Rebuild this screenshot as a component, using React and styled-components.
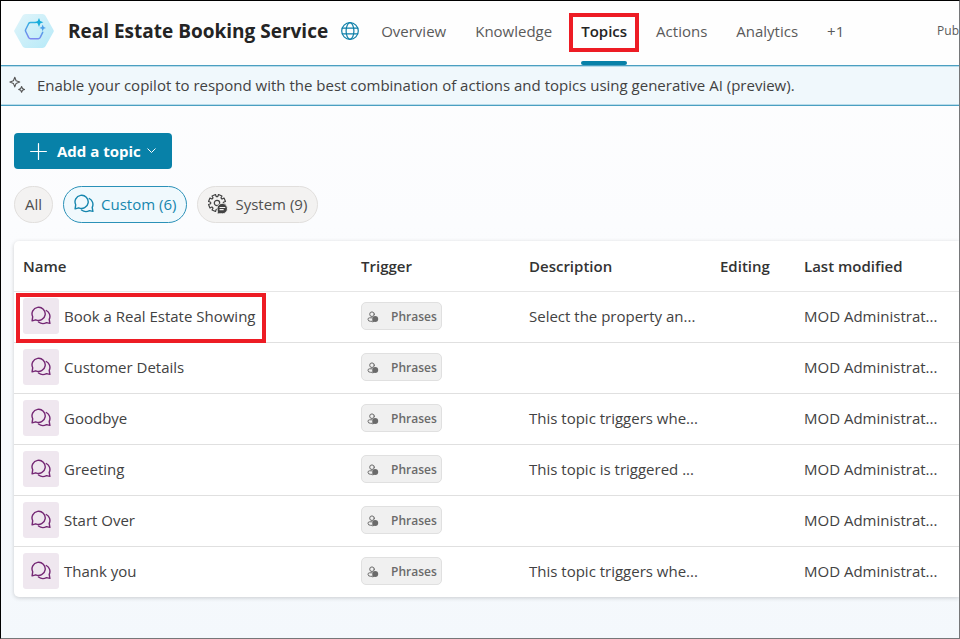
import React from "react";
import styled, { createGlobalStyle, css } from "styled-components";

const GlobalStyle = createGlobalStyle`
  * { box-sizing: border-box; }
  body { margin: 0; }
  body, button { font-family: "Open Sans", "Noto Sans", sans-serif; }
`;

const Page = styled.div`
  min-height: 100vh;
  overflow: hidden;
  border: 1px solid #000;
  border-right-color: #767779;
  border-bottom-color: #767779;
  background: linear-gradient(180deg, #fefefe 0%, #fbfcfe 35%, #f4f8fc 100%);
  color: #424242;
  font-size: 15px;
  line-height: 20px;
`;

const Header = styled.header`
  display: flex;
  align-items: center;
  height: 64px;
  padding: 0 0 4px 13px;
  background: #fefefe;
  white-space: nowrap;
`;

const Title = styled.h1`
  margin: 0 13px 0 14px;
  color: #242424;
  font-size: 19px;
  line-height: 28px;
  font-weight: 700;
`;

const Nav = styled.nav`
  display: flex;
  align-self: stretch;
  gap: 29px;
  margin-left: 22px;
`;

const highlight = css`
  &::after {
    content: "";
    position: absolute;
    border: 4px solid #ed1c24;
    pointer-events: none;
  }
`;

const NavLink = styled.a`
  position: relative;
  display: flex;
  align-items: center;
  color: ${(p) => (p.$active ? "#242424" : "#5a5a5a")};
  font-weight: ${(p) => (p.$active ? 600 : 400)};
  text-decoration: none;
  ${(p) =>
    p.$active &&
    css`
      &::before {
        content: "";
        position: absolute;
        left: 0;
        right: 0;
        bottom: -4px;
        height: 4px;
        border-radius: 2px;
        background: #0881a8;
      }
      ${highlight}
      &::after {
        inset: 12px -12px 9px;
      }
    `}
`;

const HeaderButton = styled.button`
  margin-left: auto;
  padding: 0;
  border: 0;
  background: none;
  color: #5a5a5a;
  font-size: 12px;
  line-height: 20px;
`;

const Banner = styled.div`
  display: flex;
  align-items: center;
  gap: 11px;
  height: 41px;
  padding: 0 0 2px 8px;
  border: 1px solid #4b9fc1;
  border-width: 1px 0;
  background: #f0f8fc;
  box-shadow: inset 0 1px #b9dcea, inset 0 -1px #b9dcea;
  white-space: nowrap;
`;

const Content = styled.main`
  padding: 27px 0 41px 13px;
`;

const AddButton = styled.button`
  display: flex;
  align-items: center;
  height: 36px;
  padding: 0 16px;
  gap: 10px;
  border: 0;
  border-radius: 4px;
  background: #0881a8;
  color: #fff;
  font-size: 15px;
  line-height: 20px;
  font-weight: 700;
`;

const Pills = styled.div`
  display: flex;
  gap: 10px;
  margin: 17px 0 18px;
`;

const Pill = styled.button`
  display: flex;
  align-items: center;
  gap: 7px;
  height: 37px;
  padding: 0 10px 2px;
  border: 1px solid ${(p) => (p.$active ? "#2b91b8" : "#e1dfdd")};
  border-radius: 19px;
  background: ${(p) => (p.$active ? "#f0f9fd" : "#f3f2f1")};
  color: ${(p) => (p.$active ? "#1686ae" : "#4f4f4f")};
  font-size: 15px;
  line-height: 20px;
`;

const Card = styled.section`
  border-radius: 5px 0 0 5px;
  background: #fff;
  box-shadow: 0 1px 4px rgba(0, 0, 0, 0.18);
`;

const Table = styled.table`
  width: 100%;
  table-layout: fixed;
  border-collapse: separate;
  border-spacing: 0;
  text-align: left;
  white-space: nowrap;
`;

const Col = styled.col`
  width: ${(p) => p.$width};
`;

const HeadCell = styled.th`
  height: 51px;
  padding: 0 0 0 9px;
  border-bottom: 1px solid #e6e6e6;
  color: #333;
  font-weight: 600;
`;

const Row = styled.tr`
  &:last-child td {
    height: 50px;
    border-bottom: 0;
  }
`;

const Cell = styled.td`
  height: 51px;
  padding: 0 0 2px 9px;
  border-bottom: 1px solid #e0e0e0;
`;

const Topic = styled.a`
  position: relative;
  display: inline-flex;
  align-items: center;
  gap: 5px;
  vertical-align: middle;
  color: #424242;
  text-decoration: none;
  ${(p) =>
    p.$highlighted &&
    css`
      ${highlight}
      &::after {
        inset: -5px -11px -9px -7px;
      }
    `}
`;

const Tile = styled.span`
  display: flex;
  align-items: center;
  justify-content: center;
  width: 36px;
  height: 36px;
  border-radius: 3px;
  background: #efe7ef;
  color: #742774;
`;

const Tag = styled.span`
  display: inline-flex;
  align-items: center;
  gap: 12px;
  height: 28px;
  padding: 2px 4px 0 5px;
  border: 1px solid #e0e0e0;
  border-radius: 5px;
  background: #f0f0f0;
  color: #6a6a6a;
  font-size: 12px;
  line-height: 16px;
  font-weight: 600;
  vertical-align: middle;
`;

const Icon = styled.svg.attrs({ "aria-hidden": true })`
  flex: none;
  fill: none;
  stroke: currentColor;
  stroke-width: ${(p) => p.$weight || 1};
  stroke-linejoin: round;
  stroke-linecap: round;
`;

const Logo = () => (
  <Icon width="40" height="36" viewBox="0 0 40 36">
    <defs>
      <linearGradient id="tile" x1="0" y1="0" x2="1" y2="1">
        <stop offset="0" stopColor="#e2f5fa" />
        <stop offset="1" stopColor="#b5e9f8" />
      </linearGradient>
      <linearGradient id="ring" x1="0.6" y1="0" x2="0.4" y2="1">
        <stop offset="0" stopColor="#2fb4e0" />
        <stop offset="1" stopColor="#7d88f0" />
      </linearGradient>
    </defs>
    <path d="M11.5 1h17q2 0 3 1.800l8 14.200q.6 1 0 2l-8 14.200q-1 1.800-3 1.800h-17q-2 0-3-1.800l-8-14.200q-.6-1 0-2l8-14.200q1-1.800 3-1.800z" fill="url(#tile)" stroke="none" />
    <path d="M21.500 9.500H16.500q-1.200 0-1.800 1l-3 6q-.6 1 0 2l3 6.200q.6 1 1.800 1h7.800q1.200 0 1.800-1l2.600-5.400" stroke="url(#ring)" strokeWidth="1.500" />
    <path d="M25 5l1.200 3 3.200 1.300-3.200 1.300L25 14l-1.300-3.400-3.200-1.300L23.700 8z" fill="#17addb" stroke="none" />
    <path d="M28.700 11.500l1 2.500 2.300.9-2.300.9-1 2.500-1-2.500-2.300-.9 2.300-.9z" fill="#4a9fe8" stroke="none" />
  </Icon>
);

const GlobeIcon = () => (
  <Icon width="18" height="18" viewBox="0 0 18 18" $weight={1.2} color="#0e7fa8">
    <circle cx="9" cy="9" r="8.300" />
    <ellipse cx="9" cy="9" rx="3.900" ry="8.300" />
    <path d="M1.300 6.200h15.400M1.300 11.800h15.400" />
  </Icon>
);

const SparkleIcon = () => (
  <Icon width="17" height="18" viewBox="0 0 17 18" $weight={1.1} color="#555">
    <path d="M5.800 1.200l1.300 3.500 3.600 1.300-3.600 1.400-1.300 3.500-1.400-3.500L.9 6l3.500-1.300z" />
    <path d="M12.600 10.500l.9 2 2 .9-2 .9-.9 2-.9-2-2-.9 2-.9z" />
  </Icon>
);

const ChatIcon = () => (
  <Icon width="20" height="20" viewBox="0 0 20 20" $weight={1.4}>
    <path d="M1.700 10.800A6.600 6.600 0 1 1 4.700 13.800L1.100 14.900z" />
    <path d="M15.300 4.500A6.600 6.600 0 0 1 18.200 13.400L18.900 17.400 15.500 16.600A7.200 7.200 0 0 1 7.500 16" />
  </Icon>
);

const gearOutline = Array.from({ length: 8 }, (_, tooth) =>
  [[-0.27, 6.4], [-0.22, 8.6], [0.22, 8.6], [0.27, 6.4]].map(([turn, radius]) => {
    const angle = ((tooth + 0.5) * Math.PI) / 4 + turn;
    return `${(9 + radius * Math.cos(angle)).toFixed(2)},${(9 + radius * Math.sin(angle)).toFixed(2)}`;
  }).join(" ")
).join(" ");

const SystemIcon = () => (
  <Icon width="20" height="20" viewBox="0 0 20 20" $weight={1.2} color="#424242">
    <polygon points={gearOutline} />
    <circle cx="9" cy="9" r="2.700" />
    <circle cx="14.300" cy="14.600" r="5.200" fill="#424242" stroke="#f3f2f1" strokeWidth="0.800" />
    <path d="M9.600 19.600l.6-3 3 2.500z" fill="#424242" stroke="none" />
    <path d="M12 13.500h4.800M12 15.700h3.200" stroke="#f3f2f1" />
  </Icon>
);

const PhraseIcon = () => (
  <Icon width="12" height="12" viewBox="0 0 12 12" color="#6a6a6a">
    <circle cx="5" cy="3.200" r="2.300" />
    <path d="M5 10.300H3.500Q1 10.300 1 8.300 1 6.800 2.600 6.800H5" />
    <circle cx="8.200" cy="8" r="3" fill="currentColor" stroke="none" />
    <path d="M5.300 11.500l.3-2.400 1.700 1.600z" fill="currentColor" stroke="none" />
  </Icon>
);

const PlusIcon = () => (
  <Icon width="17" height="17" viewBox="0 0 17 17" $weight={1.2}>
    <path d="M8.500 .6v15.800M.6 8.500h15.800" />
  </Icon>
);

const ChevronIcon = () => (
  <Icon width="9" height="6" viewBox="0 0 9 6">
    <path d="M.8 .8l3.700 3.700L8.200 .8" />
  </Icon>
);

const ButtonLabel = styled.span`
  display: flex;
  align-items: center;
  gap: 6px;
`;

const navItems = ["Overview", "Knowledge", "Topics", "Actions", "Analytics", "+1"];

const topics = [
  { name: "Book a Real Estate Showing", description: "Select the property an...", highlighted: true },
  { name: "Customer Details", description: "" },
  { name: "Goodbye", description: "This topic triggers whe..." },
  { name: "Greeting", description: "This topic is triggered ..." },
  { name: "Start Over", description: "" },
  { name: "Thank you", description: "This topic triggers whe..." },
];

export default function App() {
  return (
    <>
      <GlobalStyle />
      <Page>
        <Header>
          <Logo />
          <Title>Real Estate Booking Service</Title>
          <GlobeIcon />
          <Nav>
            {navItems.map((item) => (
              <NavLink href="#" key={item} $active={item === "Topics"}>
                {item}
              </NavLink>
            ))}
          </Nav>
          <HeaderButton type="button">Pub</HeaderButton>
        </Header>
        <Banner>
          <SparkleIcon />
          <span>
            Enable your copilot to respond with the best combination of actions and topics using generative AI (preview).
          </span>
        </Banner>
        <Content>
          <AddButton type="button">
            <PlusIcon />
            <ButtonLabel>
              Add a topic
              <ChevronIcon />
            </ButtonLabel>
          </AddButton>
          <Pills>
            <Pill type="button">All</Pill>
            <Pill type="button" $active>
              <ChatIcon />
              Custom (6)
            </Pill>
            <Pill type="button">
              <SystemIcon />
              System (9)
            </Pill>
          </Pills>
          <Card>
            <Table>
              <colgroup>
                <Col />
                <Col $width="168px" />
                <Col $width="191px" />
                <Col $width="84px" />
                <Col $width="164px" />
              </colgroup>
              <thead>
                <tr>
                  <HeadCell>Name</HeadCell>
                  <HeadCell>Trigger</HeadCell>
                  <HeadCell>Description</HeadCell>
                  <HeadCell>Editing</HeadCell>
                  <HeadCell>Last modified</HeadCell>
                </tr>
              </thead>
              <tbody>
                {topics.map((topic) => (
                  <Row key={topic.name}>
                    <Cell>
                      <Topic href="#" $highlighted={topic.highlighted}>
                        <Tile>
                          <ChatIcon />
                        </Tile>
                        {topic.name}
                      </Topic>
                    </Cell>
                    <Cell>
                      <Tag>
                        <PhraseIcon />
                        Phrases
                      </Tag>
                    </Cell>
                    <Cell>{topic.description}</Cell>
                    <Cell />
                    <Cell>MOD Administrat...</Cell>
                  </Row>
                ))}
              </tbody>
            </Table>
          </Card>
        </Content>
      </Page>
    </>
  );
}
